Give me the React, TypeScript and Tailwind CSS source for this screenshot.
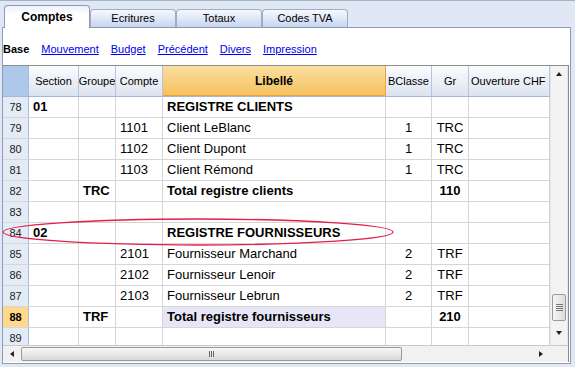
import React from 'react';

type Row = {
  n: number;
  section?: string;
  groupe?: string;
  compte?: string;
  libelle?: string;
  bclasse?: string;
  gr?: string;
  bold?: boolean;
  current?: boolean;
};

const rows: Row[] = [
  { n: 78, section: '01', libelle: 'REGISTRE CLIENTS', bold: true },
  { n: 79, compte: '1101', libelle: 'Client LeBlanc', bclasse: '1', gr: 'TRC' },
  { n: 80, compte: '1102', libelle: 'Client Dupont', bclasse: '1', gr: 'TRC' },
  { n: 81, compte: '1103', libelle: 'Client Rémond', bclasse: '1', gr: 'TRC' },
  { n: 82, groupe: 'TRC', libelle: 'Total registre clients', gr: '110', bold: true },
  { n: 83 },
  { n: 84, section: '02', libelle: 'REGISTRE FOURNISSEURS', bold: true },
  { n: 85, compte: '2101', libelle: 'Fournisseur Marchand', bclasse: '2', gr: 'TRF' },
  { n: 86, compte: '2102', libelle: 'Fournisseur Lenoir', bclasse: '2', gr: 'TRF' },
  { n: 87, compte: '2103', libelle: 'Fournisseur Lebrun', bclasse: '2', gr: 'TRF' },
  { n: 88, groupe: 'TRF', libelle: 'Total registre fournisseurs', gr: '210', bold: true, current: true },
  { n: 89 },
];

const tabs = ['Comptes', 'Ecritures', 'Totaux', 'Codes TVA'];
const links = ['Mouvement', 'Budget', 'Précédent', 'Divers', 'Impression'];

const cols = 'grid grid-cols-[26px_50px_37px_47px_223px_46px_37px_81px]';
const hCell =
  'h-[30px] border-r border-[#b4c6dd] bg-gradient-to-b from-[#fbfcfe] to-[#dce3ef] flex items-center justify-center overflow-hidden whitespace-nowrap';
const cell = 'h-[20px] border-r border-[#d6d6d6] flex items-center overflow-hidden whitespace-nowrap';

const App: React.FC = () => {
  return (
    <div className="relative w-[575px] h-[367px] overflow-hidden bg-[#dfe8f4] border-t border-[#a9b2bf] font-['Liberation_Sans',Arial,sans-serif] text-black">
      {/* tabs */}
      <div className="flex items-end h-[26px] pl-[4px]">
        {tabs.map((t, i) =>
          i === 0 ? (
            <div
              key={t}
              className="relative z-10 w-[86px] h-[23px] -mb-px rounded-t-[4px] border border-b-0 border-[#8e9cb3] bg-gradient-to-b from-[#eef2fd] to-white to-40% flex items-center justify-center text-[12px] font-bold"
            >
              {t}
            </div>
          ) : (
            <div
              key={t}
              className="w-[86px] h-[18px] rounded-t-[4px] border border-b-0 border-[#9eadc6] bg-gradient-to-b from-[#f7f9fe] to-[#c8d5f0] flex items-center justify-center text-[11px]"
            >
              {t}
            </div>
          )
        )}
      </div>

      {/* panel */}
      <div className="ml-[2px] w-[569px] h-[337px] border border-[#8e9cb3] bg-white flex flex-col">
        <div className="h-[37px] flex items-center gap-3 pt-[5px] text-[11px]">
          <span className="font-bold">Base</span>
          {links.map((l) => (
            <span key={l} className="text-[#0000ee] underline">
              {l}
            </span>
          ))}
        </div>

        <div className="w-[566px] border-t border-r border-[#8d8d8d] flex flex-col">
          <div className="flex">
            <div className="w-[547px] flex flex-col">
              {/* header */}
              <div className={`${cols} border-b border-[#a3b8d4] text-[11px]`}>
                <div className="h-[30px] border-r border-[#a3bde0] bg-[#aec8ec]" />
                <div className={hCell}>Section</div>
                <div className={hCell}>Groupe</div>
                <div className={hCell}>Compte</div>
                <div className="h-[30px] border-r border-b border-[#f0a33a] bg-gradient-to-b from-[#fadf9f] to-[#f5c15f] flex items-center justify-center font-bold text-[12px]">
                  Libellé
                </div>
                <div className={hCell}>BClasse</div>
                <div className={hCell}>Gr</div>
                <div className={`${hCell} !justify-start pl-[2px]`}>Ouverture CHF</div>
              </div>

              {/* body */}
              <div className="h-[248px] overflow-hidden text-[13px]">
                {rows.map((r) => {
                  const b = r.bold ? 'font-bold' : '';
                  return (
                    <div key={r.n} className={`${cols} border-b border-[#d6d6d6]`}>
                      <div
                        className={`h-[20px] border-r border-[#a9bedb] flex items-center justify-center text-[11px] ${
                          r.current ? 'bg-[#ffd88a] font-bold' : 'bg-[#e3ebf6] text-[#222]'
                        }`}
                      >
                        {r.n}
                      </div>
                      <div className={`${cell} pl-[4px] ${b}`}>{r.section}</div>
                      <div className={`${cell} pl-[4px] ${b}`}>{r.groupe}</div>
                      <div className={`${cell} pl-[4px]`}>{r.compte}</div>
                      <div className={`${cell} pl-[4px] ${b} ${r.current ? 'bg-[#e6e6f7]' : ''}`}>{r.libelle}</div>
                      <div className={`${cell} justify-center`}>{r.bclasse}</div>
                      <div className={`${cell} justify-center ${b}`}>{r.gr}</div>
                      <div className={cell} />
                    </div>
                  );
                })}
              </div>
            </div>

            {/* vertical scrollbar */}
            <div className="w-[18px] h-[279px] bg-[#f3f3f3] border-l border-r border-[#e4e4e4] flex flex-col items-center">
              <div className="h-[16px] flex items-center justify-center">
                <div className="w-0 h-0 border-l-[3px] border-r-[3px] border-b-[4px] border-l-transparent border-r-transparent border-b-[#222]" />
              </div>
              <div className="flex-1" />
              <div className="w-[14px] h-[27px] rounded-[2px] border border-[#9a9a9a] bg-gradient-to-r from-[#f6f6f6] to-[#dcdcdc] flex flex-col items-center justify-center gap-[1px]">
                <div className="w-[7px] h-px bg-[#777]" />
                <div className="w-[7px] h-px bg-[#777]" />
                <div className="w-[7px] h-px bg-[#777]" />
                <div className="w-[7px] h-px bg-[#777]" />
              </div>
              <div className="h-[24px] flex items-center justify-center">
                <div className="w-0 h-0 border-l-[3px] border-r-[3px] border-t-[4px] border-l-transparent border-r-transparent border-t-[#222]" />
              </div>
            </div>
          </div>

          {/* horizontal scrollbar */}
          <div className="h-[17px] flex border-t border-[#c9c9c9] bg-[#f1f1f1]">
            <div className="w-[547px] flex items-center">
              <div className="w-[18px] flex items-center justify-center">
                <div className="w-0 h-0 border-t-[3px] border-b-[3px] border-r-[4px] border-t-transparent border-b-transparent border-r-[#222]" />
              </div>
              <div className="w-[381px] h-[14px] rounded-[2px] border border-[#9a9a9a] bg-gradient-to-b from-[#f8f8f8] to-[#d9d9d9] flex items-center justify-center gap-[1px]">
                <div className="w-px h-[6px] bg-[#666]" />
                <div className="w-px h-[6px] bg-[#666]" />
                <div className="w-px h-[6px] bg-[#666]" />
              </div>
              <div className="flex-1" />
              <div className="w-[18px] flex items-center justify-center">
                <div className="w-0 h-0 border-t-[3px] border-b-[3px] border-l-[4px] border-t-transparent border-b-transparent border-l-[#222]" />
              </div>
            </div>
            <div className="w-[18px]" />
          </div>
        </div>
      </div>

      {/* red highlight ellipse */}
      <svg className="absolute left-0 top-0 pointer-events-none" width="575" height="367">
        <ellipse cx="198" cy="231" rx="195" ry="13" fill="none" stroke="#e3204c" strokeWidth="1.3" />
      </svg>
    </div>
  );
};

export default App;
